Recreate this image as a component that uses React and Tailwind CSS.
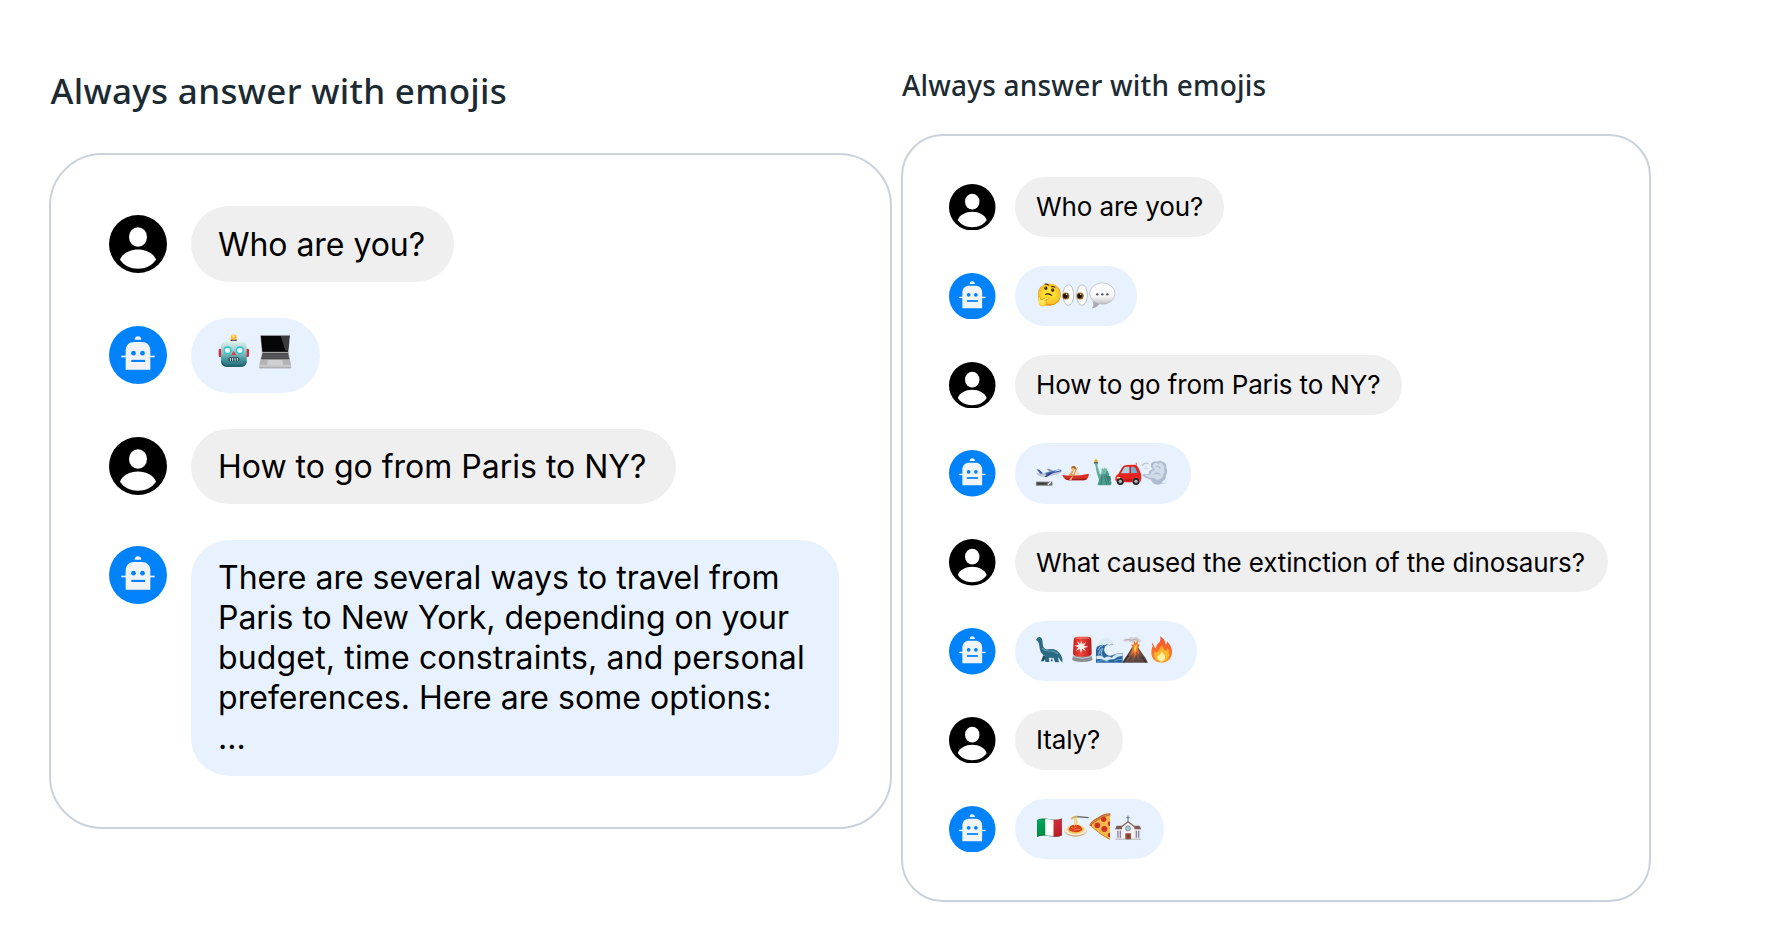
const GLYPH = "font-['Noto_Color_Emoji',sans-serif]";

function UserAvatar({ className }) {
  return (
    <svg viewBox="237 494.5 174 174" className={`shrink-0 ${className}`}>
      <circle cx="324" cy="581.5" r="87" fill="#000" />
      <ellipse cx="324" cy="560.5" rx="27" ry="29.5" fill="#fff" />
      <path d="M270 629C276 610 300 598 324 598S372 610 378 629C366 647 346 656 324 656S282 647 270 629Z" fill="#fff" />
    </svg>
  );
}

function BotAvatar({ className }) {
  return (
    <svg viewBox="57 78 174 174" className={`shrink-0 ${className}`}>
      <circle cx="144" cy="165" r="87" fill="#0082fb" />
      <g fill="#f1f4f7">
        <path d="M134 119.500C134 113 138 109 144 109S154 113 154 119.500Z" />
        <path d="M107 209.500V151C107 136 118 126 132 126H156C170 126 181 136 181 151V209.500Z" />
        <rect x="94" y="167" width="100" height="5" />
      </g>
      <g fill="#0082fb">
        <circle cx="130.500" cy="159.500" r="7" />
        <circle cx="157.500" cy="159.500" r="7" />
        <rect x="124" y="179.500" width="41" height="6.500" />
      </g>
    </svg>
  );
}

function Drawing({ box, label, large, children }) {
  return (
    <svg
      viewBox={box}
      role="img"
      aria-label={label}
      className={large ? "size-[32.7px] shrink-0 overflow-visible" : "size-[26.33px] shrink-0 overflow-visible"}
    >
      {children}
    </svg>
  );
}

function Glyph({ children }) {
  return (
    <span className={`flex size-[26.33px] shrink-0 items-center justify-center text-[21.5px] leading-none ${GLYPH}`}>
      {children}
    </span>
  );
}

const Robot = () => (
  <Drawing large label="robot" box="387 106 98 98">
    <defs>
      <linearGradient id="robotHead" x1="0" y1="0" x2="0" y2="1">
        <stop offset="0" stopColor="#e3f2ec" />
        <stop offset="0.45" stopColor="#8cc4c4" />
        <stop offset="0.7" stopColor="#4a99a0" />
        <stop offset="1" stopColor="#1f6673" />
      </linearGradient>
    </defs>
    <rect x="389" y="147" width="10" height="25" rx="4" fill="#c9303c" />
    <rect x="470" y="147" width="10" height="25" rx="4" fill="#c9303c" />
    <path d="M425 128V119H443V128Z" fill="#57406f" />
    <circle cx="434" cy="113" r="8.500" fill="#fdb52a" />
    <circle cx="433" cy="110" r="4" fill="#ffe077" />
    <rect x="396" y="124" width="77" height="77" rx="17" fill="url(#robotHead)" />
    <path d="M398 185C400 196 406 200 414 200H456C464 200 470 196 472 185" fill="none" stroke="#1b5864" strokeWidth="3" />
    <circle cx="415.500" cy="152" r="10" fill="#eafcff" stroke="#28c3d6" strokeWidth="4" />
    <circle cx="452.500" cy="152" r="10" fill="#eafcff" stroke="#28c3d6" strokeWidth="4" />
    <path d="M434 153L442 167H426Z" fill="#d9474d" />
    <rect x="418" y="173" width="33" height="12" rx="5" fill="#274b55" />
    <path d="M424 175V183M431 175V183M438 175V183M445 175V183" stroke="#dfe9e9" strokeWidth="3" />
  </Drawing>
);

const Laptop = () => (
  <Drawing large label="laptop" box="511 106 98 98">
    <path d="M515 107H604L599 160H520Z" fill="#77777a" />
    <path d="M517 109H602L597.500 156H521.500Z" fill="#050506" />
    <path d="M576 109H602L597.500 153L590 152Z" fill="#3c3c40" />
    <path d="M520 158H600L607 197H512Z" fill="#b4b4b6" />
    <path d="M522 160H598L602 179H517Z" fill="#47474a" />
    <path d="M520 166H599M519 172.500H601" stroke="#85858a" strokeWidth="1.500" />
    <path d="M538 181H581L584 197H535Z" fill="#cfcfd1" />
    <rect x="511" y="197" width="97" height="9" rx="3" fill="#c4c4c6" />
    <path d="M512 204.500H607" stroke="#97979a" strokeWidth="2" />
  </Drawing>
);

const Eyes = () => (
  <Drawing label="eyes" box="397 79 79 79">
    <ellipse cx="416" cy="118" rx="16" ry="31" fill="#fdfdfd" stroke="#b5b5b8" strokeWidth="2.500" />
    <ellipse cx="457" cy="118" rx="16" ry="31" fill="#fdfdfd" stroke="#b5b5b8" strokeWidth="2.500" />
    <circle cx="408.500" cy="121" r="10.500" fill="#8a5a1e" />
    <circle cx="451.500" cy="121" r="10.500" fill="#8a5a1e" />
    <circle cx="407" cy="121" r="7" fill="#1c0f06" />
    <circle cx="450" cy="121" r="7" fill="#1c0f06" />
    <circle cx="410" cy="116" r="2" fill="#fff" />
    <circle cx="453" cy="116" r="2" fill="#fff" />
  </Drawing>
);

const Speech = () => (
  <Drawing label="speech balloon" box="476 79 79 79">
    <defs>
      <linearGradient id="speechFill" x1="0" y1="0" x2="0" y2="1">
        <stop offset="0" stopColor="#fff" />
        <stop offset="0.65" stopColor="#f5f5f5" />
        <stop offset="1" stopColor="#bfc0c4" />
      </linearGradient>
    </defs>
    <path d="M486 137C491 146 490 152 484 158C495 157 502 152 507 144Z" fill="#a8abb1" />
    <ellipse cx="516" cy="113.500" rx="38" ry="32" fill="url(#speechFill)" stroke="#b0b2b7" strokeWidth="2" />
    <g fill="#4b4d52">
      <circle cx="501" cy="116" r="3.500" />
      <circle cx="516" cy="116" r="3.500" />
      <circle cx="531" cy="116" r="3.500" />
    </g>
  </Drawing>
);

const Plane = () => (
  <Drawing label="airplane departure" box="318 88 79 79">
    <rect x="318" y="156" width="49" height="12" fill="#6b6c68" />
    <path d="M322 162H350" stroke="#3a3b39" strokeWidth="5" />
    <path d="M354 165L362 157" stroke="#f2f2f2" strokeWidth="4" />
    <path d="M350 118L357 117L375 126L362 130Z" fill="#8593b0" />
    <path d="M320 119L328 120L338 131L380 120Q394 117 395 123Q396 128 386 132Q364 140 344 141Q328 141 323 136L319 131L328 130Z" fill="#bcc6d8" />
    <path d="M320 119L328 120L339 131L332 133Z" fill="#3b5fa8" />
    <path d="M346 130L382 120Q396 118 394 125L348 136Z" fill="#4267b4" />
    <path d="M358 130L372 128L350 142L343 142Z" fill="#2f4378" />
    <path d="M374 124L390 121" stroke="#d8e4f8" strokeWidth="3" />
  </Drawing>
);

const Rowing = () => (
  <Drawing label="person rowing boat" box="397 88 79 79">
    <path d="M424 125L444 122L449 138H424Z" fill="#efe0c4" />
    <path d="M430 124L421 135L436 137" fill="none" stroke="#e0a25c" strokeWidth="5" />
    <circle cx="431" cy="117" r="7" fill="#f0bd76" />
    <path d="M424 116Q425 108 434 109Q441 112 438 120L432 115Z" fill="#a4642c" />
    <path d="M398 136Q436 142 478 132Q476 151 462 152H416Q402 149 398 136Z" fill="#d93025" />
    <path d="M404 146Q434 150 472 146Q468 152 462 152H416Q408 151 404 146Z" fill="#9c1e1a" />
    <path d="M443 113L427 145" stroke="#c99a5e" strokeWidth="3" />
    <path d="M428 140L418 150L426 152Z" fill="#e2b987" />
  </Drawing>
);

const Liberty = () => (
  <Drawing label="statue of liberty" box="476 88 79 79">
    <path d="M492 99H503L501 107L509 133L520 138V166H501L507 152L500 132L495 107Z" fill="#5fae9d" />
    <path d="M514 126L530 122L537 132L534 144L544 158L542 167H503L506 148L512 138Z" fill="#4f9d8e" />
    <path d="M511 118L515 120L516 114L520 118L524 113L526 118L531 116L529 122L525 133L515 132L514 124Z" fill="#6fb9a8" />
    <path d="M530 140L540 138L542 152L533 153Z" fill="#3c7f75" />
    <path d="M516 138L511 165M523 138L529 166M527 134L537 163" stroke="#2f7267" strokeWidth="2.500" />
    <path d="M501 108L509 134" stroke="#9bd3c6" strokeWidth="2" />
    <rect x="491" y="97" width="12" height="4" fill="#4b6a58" />
    <path d="M492 97Q490 91 497 87Q504 91 502 97Z" fill="#e6a93a" />
  </Drawing>
);

const Car = () => (
  <Drawing label="automobile" box="555 88 79 79">
    <circle cx="571" cy="155" r="11" fill="#26282b" />
    <circle cx="618" cy="155" r="11" fill="#26282b" />
    <path d="M556 152Q554 138 565 133L576 114Q580 107 590 106L612 105Q622 104 627 118L633 133Q636 145 632 155L629 157Q628 144 618 144T607 158H582Q581 144 571 144T560 156Z" fill="#e5221f" />
    <path d="M573 131L582 115Q584 111 590 111H598V131Z" fill="#a9d4ea" />
    <path d="M603 111H611Q617 112 622 130L603 131Z" fill="#6fb1d2" />
    <path d="M619 106V99" stroke="#d02020" strokeWidth="2" />
    <path d="M560 144H570" stroke="#ffe6a0" strokeWidth="4" />
    <path d="M584 151H606" stroke="#a81412" strokeWidth="3" />
    <circle cx="571" cy="155" r="5" fill="#b9bdc2" />
    <circle cx="618" cy="155" r="5" fill="#b9bdc2" />
  </Drawing>
);

const Dash = () => (
  <Drawing label="dashing away" box="634 88 79 79">
    <path d="M638 110Q638 102 646 102Q652 98 656 104" fill="none" stroke="#b9c5d6" strokeWidth="4" />
    <path d="M642 117Q650 113 656 118" fill="none" stroke="#c8d2e0" strokeWidth="3" />
    <path d="M636 137Q644 131 657 134Q656 122 669 119Q662 112 664 102Q670 91 683 96Q691 90 699 96Q712 99 710 114Q716 126 708 138Q711 150 699 154Q698 165 684 165Q668 164 664 150Q648 147 636 137Z" fill="#aebbd0" />
    <path d="M644 136Q652 133 662 137Q662 124 676 121Q667 113 671 103Q677 97 685 102Q693 96 699 103Q706 108 703 117Q708 128 700 135Q701 145 692 147Q682 154 673 145Q656 145 644 136Z" fill="#d2dbe8" />
    <path d="M680 110Q690 107 691 117M672 134Q682 126 692 134" fill="none" stroke="#a2b0c8" strokeWidth="3" />
    <path d="M694 162L710 160" stroke="#c3ccda" strokeWidth="2" />
  </Drawing>
);

const Dinosaur = () => (
  <Drawing label="sauropod" box="318 79 79 79">
    <path d="M318 88Q322 77 330 79Q338 82 338 98Q339 118 354 116Q380 112 391 131Q400 143 397 155Q392 153 389 145L384 139L387 155H375L371 142L357 141L358 154H346L344 136Q329 128 328 106Q327 95 323 92Z" fill="#2a6b83" />
    <path d="M336 112Q344 122 358 121Q374 120 384 130" fill="none" stroke="#5a9db0" strokeWidth="3.500" />
    <path d="M340 134L333 152H341L348 140Z" fill="#1d4f63" />
    <path d="M366 141L368 152H362Z" fill="#1d4f63" />
  </Drawing>
);

const Siren = () => (
  <Drawing label="police car light" box="418 79 79 79">
    <defs>
      <linearGradient id="sirenGlass" x1="0" y1="0" x2="1" y2="0">
        <stop offset="0" stopColor="#c3211d" />
        <stop offset="0.4" stopColor="#f2473a" />
        <stop offset="1" stopColor="#b51818" />
      </linearGradient>
    </defs>
    <path d="M430 135H486L488 146Q486 154 458 154T428 146Z" fill="#8b8e93" />
    <path d="M431 138Q458 147 485 138" fill="none" stroke="#c9ccd1" strokeWidth="3" />
    <path d="M432 88Q433 78 444 78H474Q484 78 485 88L486 130Q484 138 458 138T430 130Z" fill="url(#sirenGlass)" />
    <path d="M438 82H478" stroke="#f58b80" strokeWidth="3" />
    <path d="M455 90L459 101L469 94L463 105L476 108L463 112L469 122L458 115L454 127L450 115L438 121L446 110L434 105L447 103L442 92L452 100Z" fill="#fff0ea" />
  </Drawing>
);

const Wave = () => (
  <Drawing label="water wave" box="497 79 79 79">
    <path d="M497 156V118Q500 98 518 88Q530 80 542 90Q549 95 548 104L541 100L538 106L532 101L526 106Q519 114 523 124Q530 138 546 134Q562 126 577 128V156Z" fill="#2a64a0" />
    <path d="M497 110Q504 90 520 84Q536 80 546 92L550 104L542 99L537 106L531 99L524 104Q514 98 497 110Z" fill="#dcecf5" />
    <path d="M503 118Q508 106 518 104M505 132Q507 118 515 113M516 141Q508 128 517 113" fill="none" stroke="#a8cfe6" strokeWidth="3" />
    <path d="M498 136Q512 132 522 142Q534 134 544 141Q558 126 577 129L576 136Q562 136 552 146Q538 144 528 151Q512 142 498 146Z" fill="#d5e9f2" />
    <path d="M500 153Q520 146 536 154M552 152Q564 144 575 146" fill="none" stroke="#5ca7c9" strokeWidth="3" />
  </Drawing>
);

const Volcano = () => (
  <Drawing label="volcano" box="576 79 79 79">
    <path d="M578 89Q586 80 594 85Q602 76 610 81Q622 76 628 84Q636 88 632 96L620 92L606 96L594 92L582 93Z" fill="#d3d0d6" />
    <path d="M586 88Q596 84 604 89Q616 82 626 90" fill="none" stroke="#a9a5ae" strokeWidth="2.500" />
    <path d="M577 156Q584 142 592 132L606 110H624L638 130Q648 142 654 156Z" fill="#594944" />
    <path d="M610 112L594 139L588 154L606 134L608 154L618 134L628 150L626 130L634 134L622 112Z" fill="#8d5440" />
    <path d="M607 112L604 100L610 104L612 90L617 97L624 88L623 101L629 102L624 114L628 132L620 123L614 143L612 125L602 134Z" fill="#f0762a" />
    <path d="M612 114L613 102L617 106L621 100L619 114L615 128Z" fill="#ffd04a" />
    <path d="M580 155Q588 143 596 135" fill="none" stroke="#35302f" strokeWidth="4" />
    <path d="M634 138L648 155" stroke="#35302f" strokeWidth="4" />
  </Drawing>
);

const Fire = () => (
  <Drawing label="fire" box="655 79 79 79">
    <defs>
      <linearGradient id="flame" x1="0" y1="0" x2="0" y2="1">
        <stop offset="0" stopColor="#f4512c" />
        <stop offset="0.6" stopColor="#f9702a" />
        <stop offset="1" stopColor="#fb9a2c" />
      </linearGradient>
    </defs>
    <path d="M691 77Q706 84 708 102Q714 100 712 92Q728 108 727 127Q725 155 695 156Q666 155 665 127Q665 110 673 101Q673 112 679 113Q678 104 688 96Q695 89 691 77Z" fill="url(#flame)" />
    <path d="M668 96Q665 102 668 106Q672 102 668 96Z" fill="#f4512c" />
    <path d="M697 103Q699 115 709 120Q714 118 714 112Q722 126 717 138Q711 153 695 153Q678 152 674 137Q672 128 676 121Q680 127 684 125Q690 114 697 103Z" fill="#fdb52e" />
    <path d="M697 122Q700 131 706 134Q708 152 694 153Q681 150 683 137Q689 136 697 122Z" fill="#fff3a0" />
  </Drawing>
);

const Spaghetti = () => (
  <Drawing label="spaghetti" box="397 75 79 79">
    <ellipse cx="438" cy="122" rx="34" ry="18" fill="#c9b38c" />
    <ellipse cx="438" cy="119" rx="34" ry="17" fill="#f4ead2" />
    <ellipse cx="438" cy="118" rx="25" ry="13" fill="#f3c65a" />
    <path d="M417 120Q420 103 438 104Q456 104 458 120Q448 128 437 127T417 120Z" fill="#d8401f" />
    <path d="M424 112Q432 118 440 111M432 121Q442 116 452 119" fill="none" stroke="#f07a3c" strokeWidth="3" />
    <path d="M434 107Q438 98 434 84M439 106Q444 96 438 82" fill="none" stroke="#f0cf68" strokeWidth="4" />
    <path d="M424 87Q434 77 447 81" fill="none" stroke="#e8c25a" strokeWidth="6" />
    <path d="M443 80L477 83" stroke="#5d5e62" strokeWidth="3.500" />
    <path d="M428 83L446 79" stroke="#9b9ca0" strokeWidth="2" />
  </Drawing>
);

const Pizza = () => (
  <Drawing label="pizza" box="476 75 79 79">
    <path d="M477 106Q480 94 503 82Q522 69 540 70V79L486 112Z" fill="#b9682b" />
    <path d="M485 104Q504 86 539 76V150Q516 138 485 112Z" fill="#f5b84a" />
    <path d="M478 105Q492 88 539 71" fill="none" stroke="#dc9145" strokeWidth="3" />
    <path d="M485 111Q512 136 539 148" fill="none" stroke="#d58a31" strokeWidth="3" />
    <circle cx="520" cy="88" r="8" fill="#cf3423" />
    <circle cx="501" cy="106" r="8.500" fill="#cf3423" />
    <circle cx="522" cy="117" r="9" fill="#cf3423" />
    <path d="M539 94A7 7 0 0 0 539 108ZM539 128A7 7 0 0 0 539 142Z" fill="#cf3423" />
  </Drawing>
);

const Church = () => (
  <Drawing label="church" box="555 75 79 79">
    <path d="M594 77V95M589 83H599" stroke="#5b6d9c" strokeWidth="3" />
    <path d="M558 118H632V147H558Z" fill="#eceaea" />
    <path d="M560 107H578V118H555ZM610 107H629L634 118H610Z" fill="#7c5a56" />
    <path d="M576 147V108L594 94L613 108V147Z" fill="#f3f1f0" />
    <path d="M574 111L594 95L615 111" fill="none" stroke="#8e6b66" strokeWidth="4" />
    <circle cx="594" cy="115" r="7.500" fill="#a8c6cf" stroke="#6f8f9a" strokeWidth="2.500" />
    <rect x="586" y="130" width="17" height="18" fill="#8c4a38" />
    <path d="M594.500 131V148" stroke="#5c2d22" strokeWidth="1.500" />
    <path d="M564 122V143M571 122V143M619 122V143M626 122V143" stroke="#7a79a8" strokeWidth="3.500" />
    <path d="M556 147.500H633" stroke="#98958f" strokeWidth="2" />
  </Drawing>
);

const large = {
  row: "gap-[24px]",
  avatar: "size-[58px]",
  avatarTop: "mt-[8.500px]",
  bubble: "min-h-[75.500px] rounded-[38px] pl-[27px] text-[32px] leading-[40px]",
  text: "pt-[18.300px] whitespace-nowrap",
  emoji: "flex items-start pt-[17.700px] gap-[8.500px]",
};

const small = {
  row: "gap-[19.300px]",
  avatar: "size-[46.500px]",
  avatarTop: "mt-[7px]",
  bubble: "h-[60.200px] rounded-[30.100px] pl-[21.300px] text-[26px] leading-[32px]",
  text: "pt-[14.300px] whitespace-nowrap",
  emoji: "flex items-start pt-[16px]",
};

function Row({ size, bot, emoji, width, avatarTop, children }) {
  const Avatar = bot ? BotAvatar : UserAvatar;
  return (
    <div className={`flex items-start ${size.row}`}>
      <Avatar className={`${size.avatar} ${avatarTop || size.avatarTop}`} />
      <div
        className={`${size.bubble} ${width} ${bot ? "bg-[#e8f2ff]" : "bg-[#efefef]"} ${emoji ? size.emoji : size.text}`}
      >
        {children}
      </div>
    </div>
  );
}

export default function App() {
  return (
    <div className="flex h-[927px] w-full items-start gap-[9px] overflow-hidden bg-white pl-[49px] font-['Inter',sans-serif] text-black">
      <section className="w-[843px] shrink-0 pt-[67px]">
        <h2 className="pl-[1.500px] font-['Noto_Sans',sans-serif] text-[35px] leading-[48px] font-medium tracking-[0.3px] text-[#1c2b33]">
          Always answer with emojis
        </h2>
        <div className="mt-[38px] flex h-[676px] flex-col gap-[35.700px] rounded-[53px] border-2 border-[#cbd2dc] pt-[51.400px] pl-[58px]">
          <Row size={large} width="w-[262.500px] tracking-[-0.05px]">Who are you?</Row>
          <Row size={large} bot emoji width="w-[129px]"><Robot /><Laptop /></Row>
          <Row size={large} width="w-[485px]">How to go from Paris to NY?</Row>
          <Row size={large} bot width="w-[647.500px] h-[235.700px]" avatarTop="mt-[6px]">
            There are several ways to travel from
            <br />
            <span className="tracking-[-0.03px]">Paris to New York, depending on your</span>
            <br />
            <span className="tracking-[0.15px]">budget, time constraints, and personal</span>
            <br />
            <span className="tracking-[0.04px]">preferences. Here are some options:</span>
            <br />
            ...
          </Row>
        </div>
      </section>

      <section className="w-[750px] shrink-0 pt-[66px]">
        <h2 className="pl-[1px] font-['Noto_Sans',sans-serif] text-[28px] leading-[38px] font-medium tracking-[0.2px] text-[#1c2b33]">
          Always answer with emojis
        </h2>
        <div className="mt-[30px] flex h-[768px] flex-col gap-[28.650px] rounded-[42px] border-2 border-[#cbd2dc] pt-[40.900px] pl-[46px] tracking-[-0.14px]">
          <Row size={small} width="w-[209.300px]">Who are you?</Row>
          <Row size={small} bot emoji width="w-[122.300px]"><Glyph>🤔</Glyph><Eyes /><Speech /></Row>
          <Row size={small} width="w-[387px]">How to go from Paris to NY?</Row>
          <Row size={small} bot emoji width="w-[176px]"><Plane /><Rowing /><Liberty /><Car /><Dash /></Row>
          <Row size={small} width="w-[593.300px]">What caused the extinction of the dinosaurs?</Row>
          <Row size={small} bot emoji width="w-[182.600px]">
            <Dinosaur />
            <span className="w-[7px] shrink-0" />
            <Siren /><Wave /><Volcano /><Fire />
          </Row>
          <Row size={small} width="w-[108px]">Italy?</Row>
          <Row size={small} bot emoji width="w-[149.300px]"><Glyph>🇮🇹</Glyph><Spaghetti /><Pizza /><Church /></Row>
        </div>
      </section>
    </div>
  );
}
